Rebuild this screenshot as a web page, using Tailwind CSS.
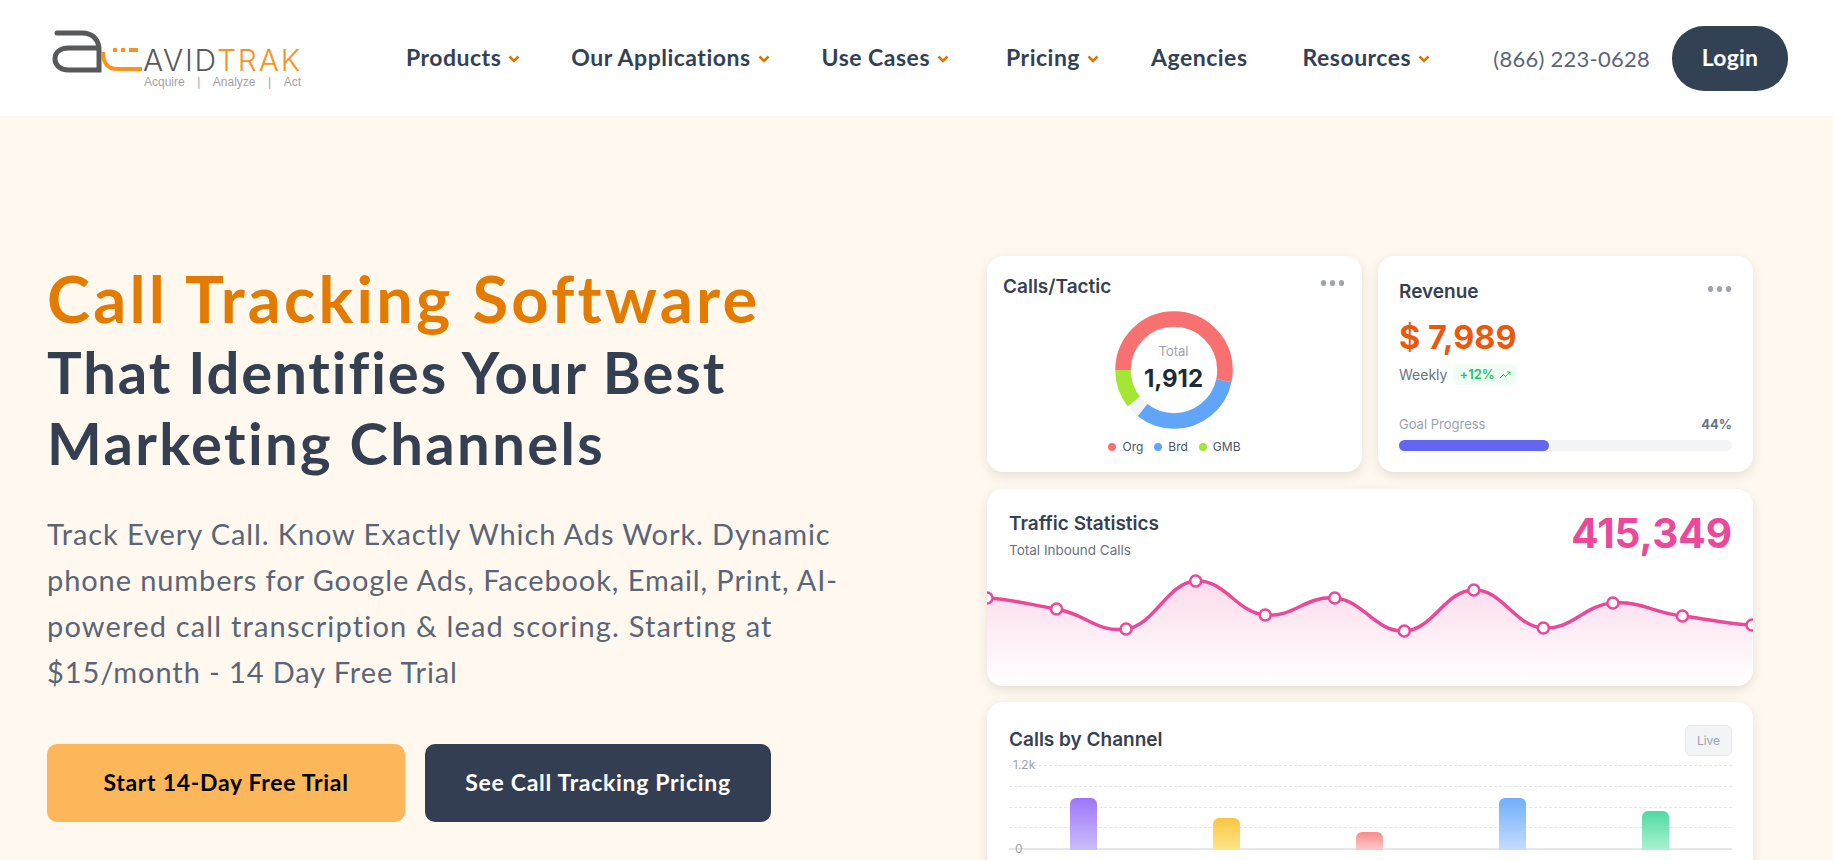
<!DOCTYPE html>
<html lang="en">
  <head>
    <meta charset="UTF-8" />
    <meta name="viewport" content="width=device-width, initial-scale=1.0" />
    <title>AvidTrak Call Tracking Software</title>
    <script src="https://cdn.jsdelivr.net/npm/@tailwindcss/browser@4"></script>
  </head>
  <body class="h-screen overflow-hidden bg-[#fff8ef] font-['Lato','Liberation_Sans',sans-serif] [font-variant-ligatures:none]">
    <!-- Header -->
    <header class="flex h-[116px] items-center bg-white pl-[47px] pr-[45px]">
      <!-- Logo -->
      <div class="relative h-[116px] w-[359px] shrink-0">
        <svg class="absolute left-[3px] top-[26px]" width="100" height="50" viewBox="0 0 100 50" fill="none">
          <path d="M7 7H32C43 7 49 14 49 24V44H19C9 44 5 38 5 33C5 27 9 22 19 22H49" stroke="#58595b" stroke-width="5" stroke-linecap="round" />
          <path d="M53 26C53 37 58 43 67 43H92" stroke="#f7931e" stroke-width="4" />
          <path d="M63 24H80" stroke="#f7931e" stroke-width="4" stroke-dasharray="4 4" />
          <path d="M80 24H88" stroke="#f7931e" stroke-width="4" />
        </svg>
        <div class="absolute left-[96px] top-[44px] whitespace-nowrap font-['Inter',sans-serif] text-[30px] font-light leading-[32px] tracking-[1.8px] text-[#58595b]">AVID<span class="text-[#f7931e]">TRAK</span></div>
        <div class="absolute left-[97px] top-[75px] flex w-[157px] justify-between font-['Liberation_Sans',sans-serif] text-[12px] leading-[14px] text-[#a3a3a3]">
          <span>Acquire</span><span>|</span><span>Analyze</span><span>|</span><span>Act</span>
        </div>
      </div>

      <nav class="-mt-[2px] flex items-center gap-[52px] text-[23px] font-bold tracking-[0.5px] text-[#334155]">
        <a class="flex items-center gap-[7px]">Products
          <svg class="mt-1" width="12" height="8" viewBox="0 0 12 8" fill="none"><path d="M1.500 1.500L6 6L10.500 1.500" stroke="#d97706" stroke-width="2.600" /></svg>
        </a>
        <a class="-ml-[1px] flex items-center gap-[7px]">Our Applications
          <svg class="mt-1" width="12" height="8" viewBox="0 0 12 8" fill="none"><path d="M1.500 1.500L6 6L10.500 1.500" stroke="#d97706" stroke-width="2.600" /></svg>
        </a>
        <a class="flex items-center gap-[7px]">Use Cases
          <svg class="mt-1" width="12" height="8" viewBox="0 0 12 8" fill="none"><path d="M1.500 1.500L6 6L10.500 1.500" stroke="#d97706" stroke-width="2.600" /></svg>
        </a>
        <a class="ml-[5px] flex items-center gap-[7px]">Pricing
          <svg class="mt-1" width="12" height="8" viewBox="0 0 12 8" fill="none"><path d="M1.500 1.500L6 6L10.500 1.500" stroke="#d97706" stroke-width="2.600" /></svg>
        </a>
        <a>Agencies</a>
        <a class="ml-[3px] flex items-center gap-[7px]">Resources
          <svg class="mt-1" width="12" height="8" viewBox="0 0 12 8" fill="none"><path d="M1.500 1.500L6 6L10.500 1.500" stroke="#d97706" stroke-width="2.600" /></svg>
        </a>
      </nav>

      <a class="ml-auto text-[22px] tracking-[0.25px] text-[#5b6577]">(866) 223-0628</a>
      <a class="ml-[22px] flex h-[65px] w-[116px] items-center justify-center rounded-[32px] bg-[#334155] pb-[2px] text-[23px] font-bold tracking-[0.2px] text-white">Login</a>
    </header>

    <!-- Hero -->
    <main class="flex items-start justify-between pl-[47px] pr-[80px] pt-[140px]">
      <section class="mt-[7px]">
        <h1 class="text-[58px] font-bold leading-[71px] tracking-[1.9px] text-[#343f52]">
          <span class="text-[65px] tracking-[3.2px] text-[#e27b00]">Call Tracking Software</span><br />
          That Identifies Your Best<br />
          <span class="tracking-[2.350px]">Marketing Channels</span>
        </h1>
        <p class="mt-[33px] text-[29px] leading-[46px] tracking-[0.9px] text-[#5b6577]">
          Track Every Call. Know Exactly Which Ads Work. Dynamic<br />
          phone numbers for Google Ads, Facebook, Email, Print, AI-<br />
          <span class="tracking-[1.170px]">powered call transcription &amp; lead scoring. Starting at</span><br />
          $15/month - 14 Day Free Trial
        </p>
        <div class="mt-[49px] flex gap-5">
          <a class="flex h-[78px] w-[358px] items-center justify-center rounded-[10px] bg-[#fbb75a] pb-[2px] text-[23px] font-bold tracking-[0.7px] text-black">Start 14-Day Free Trial</a>
          <a class="flex h-[78px] w-[346px] items-center justify-center rounded-[10px] bg-[#343e52] pb-[2px] text-[23px] font-bold tracking-[0.7px] text-white">See Call Tracking Pricing</a>
        </div>
      </section>

      <!-- Dashboard cards -->
      <section class="w-[766px] shrink-0 font-['Inter',sans-serif]">
        <div class="grid grid-cols-2 gap-4">
          <div class="h-[216px] rounded-2xl bg-white px-4 pt-[17px] shadow-[0_4px_12px_rgba(0,0,0,0.10)]">
            <div class="flex items-start justify-between">
              <h3 class="mt-[2px] text-[19px] font-semibold leading-6 text-[#374151]">Calls/Tactic</h3>
              <div class="mr-[2px] mt-[7px] flex gap-[3.500px]"><i class="size-[5.500px] rounded-full bg-[#9ca3af]"></i><i class="size-[5.500px] rounded-full bg-[#9ca3af]"></i><i class="size-[5.500px] rounded-full bg-[#9ca3af]"></i></div>
            </div>
            <div class="relative mx-auto mt-[12px] size-[118px] -translate-x-[1px]">
              <svg class="-rotate-180" width="118" height="118" viewBox="0 0 118 118" fill="none">
                <circle cx="59" cy="59" r="51" stroke="#f3f4f6" stroke-width="15.500" />
                <circle cx="59" cy="59" r="51" stroke="#a3e635" stroke-width="15.500" pathLength="360" stroke-dasharray="38 322" stroke-dashoffset="38" />
                <circle cx="59" cy="59" r="51" stroke="#60a5fa" stroke-width="15.500" pathLength="360" stroke-dasharray="116 244" stroke-dashoffset="-192" />
                <circle cx="59" cy="59" r="51" stroke="#f87171" stroke-width="15.500" pathLength="360" stroke-dasharray="192 168" />
              </svg>
              <div class="absolute inset-0 flex flex-col items-center justify-center pb-[4px]">
                <span class="text-[13px] leading-4 text-[#9ca3af]">Total</span>
                <span class="mt-[6px] text-2xl font-bold leading-7 text-[#1f2937]">1,912</span>
              </div>
            </div>
            <div class="mt-[10px] flex justify-center gap-[11px] text-xs leading-4 text-[#4b5563]">
              <span class="flex items-center gap-[6px]"><i class="size-2 rounded-full bg-[#f87171]"></i>Org</span>
              <span class="flex items-center gap-[6px]"><i class="size-2 rounded-full bg-[#60a5fa]"></i>Brd</span>
              <span class="flex items-center gap-[6px]"><i class="size-2 rounded-full bg-[#a3e635]"></i>GMB</span>
            </div>
          </div>

          <div class="h-[216px] rounded-2xl bg-white px-[21px] pt-[23px] shadow-[0_4px_12px_rgba(0,0,0,0.10)]">
            <div class="flex items-start justify-between">
              <h3 class="mt-[1px] text-[19px] font-semibold leading-6 text-[#374151]">Revenue</h3>
              <div class="mr-[1px] mt-[7px] flex gap-[3.500px]"><i class="size-[5.500px] rounded-full bg-[#9ca3af]"></i><i class="size-[5.500px] rounded-full bg-[#9ca3af]"></i><i class="size-[5.500px] rounded-full bg-[#9ca3af]"></i></div>
            </div>
            <div class="mt-[14px] text-[32.500px] font-bold leading-10 text-[#ea580c]">$ 7,989</div>
            <div class="mt-[6px] flex items-center gap-[6px]">
              <span class="text-sm text-[#6b7280]">Weekly</span>
              <span class="flex h-[21px] items-center gap-[4px] rounded-md bg-[#f0fdf4] px-[6px] text-[13px] font-semibold text-[#22c55e]">+12%
                <svg width="12" height="8" viewBox="0 0 12 8" fill="none"><path d="M1 7L4.500 3.500L6.500 5.500L11 1M8 1H11V4" stroke="#22c55e" stroke-width="1" /></svg>
              </span>
            </div>
            <div class="mt-[31px] flex justify-between text-[13px] leading-4">
              <span class="text-[#9ca3af]">Goal Progress</span>
              <span class="font-bold text-[#6b7280]">44%</span>
            </div>
            <div class="mt-[8px] h-[11px] w-full rounded-full bg-[#f3f4f6]">
              <div class="h-full w-[45%] rounded-full bg-[#6366f1]"></div>
            </div>
          </div>
        </div>

        <div class="relative mt-[17px] h-[197px] overflow-hidden rounded-2xl bg-white shadow-[0_4px_12px_rgba(0,0,0,0.10)]">
          <div class="flex items-start justify-between pl-[22px] pr-[21px] pt-[23px]">
            <div>
              <h3 class="text-[19px] font-semibold leading-6 text-[#374151]">Traffic Statistics</h3>
              <p class="mt-[4px] text-[13.500px] leading-5 text-[#6b7280]">Total Inbound Calls</p>
            </div>
            <div class="-mt-[2px] text-[40.500px] font-bold leading-[48px] text-[#ec4899]">415,349</div>
          </div>
          <svg id="traffic" class="absolute left-0 top-0" width="766" height="197" viewBox="0 0 766 197" fill="none">
            <defs>
              <linearGradient id="pink" x1="0" y1="88" x2="0" y2="197" gradientUnits="userSpaceOnUse">
                <stop offset="0" stop-color="#ec4899" stop-opacity="0.2" />
                <stop offset="1" stop-color="#ec4899" stop-opacity="0" />
              </linearGradient>
            </defs>
          </svg>
        </div>

        <div class="mt-4 h-[200px] rounded-2xl bg-white pl-[22px] pr-[21px] pt-[23px] shadow-[0_4px_12px_rgba(0,0,0,0.10)]">
          <div class="flex items-start justify-between">
            <h3 class="mt-[3px] text-[19px] font-semibold leading-6 text-[#374151]">Calls by Channel</h3>
            <span class="flex h-[31px] w-[47px] items-center justify-center rounded-md border border-[#e5e7eb] bg-[#f3f4f6] text-xs text-[#9ca3af]">Live</span>
          </div>
          <div class="relative mt-[9px] h-[85px]">
            <div class="absolute inset-0 flex flex-col justify-between">
              <i class="block border-t border-dashed border-[#e5e7eb]"></i>
              <i class="block border-t border-dashed border-[#e5e7eb]"></i>
              <i class="block border-t border-dashed border-[#e5e7eb]"></i>
              <i class="block border-t border-dashed border-[#e5e7eb]"></i>
              <i class="block border-t-2 border-[#e5e7eb]"></i>
            </div>
            <span class="absolute -top-[7px] left-[4px] text-xs leading-[14px] text-[#9ca3af]">1.2k</span>
            <span class="absolute -bottom-[6px] left-[6px] text-xs leading-[14px] text-[#9ca3af]">0</span>
            <div class="absolute bottom-0 left-[61px] right-[63px] flex items-end justify-between">
              <i class="block h-[52px] w-[27px] rounded-t-md bg-gradient-to-b from-[#9f75f8] to-[#cbbdfb]"></i>
              <i class="block h-[32px] w-[27px] rounded-t-md bg-gradient-to-b from-[#fbc53c] to-[#fde68a]"></i>
              <i class="block h-[18px] w-[27px] rounded-t-md bg-gradient-to-b from-[#f98b8b] to-[#fecaca]"></i>
              <i class="block h-[52px] w-[27px] rounded-t-md bg-gradient-to-b from-[#70aefb] to-[#c5dcfd]"></i>
              <i class="block h-[39px] w-[27px] rounded-t-md bg-gradient-to-b from-[#4cd9a3] to-[#a7f3d0]"></i>
            </div>
          </div>
        </div>
      </section>
    </main>

    <script>
      // Traffic line: smooth curve through the points, y relative to the card
      const ys = [109, 120, 140, 92, 126, 109, 142, 101, 139, 114, 127, 136];
      const step = 765 / 11;
      const pts = ys.map((y, i) => [i * step, y]);
      let line = `M${pts[0][0]} ${pts[0][1]}`;
      for (let i = 0; i < pts.length - 1; i++) {
        const p0 = pts[i - 1] || pts[i];
        const p1 = pts[i];
        const p2 = pts[i + 1];
        const p3 = pts[i + 2] || p2;
        const t = 0.15;
        const c1 = [p1[0] + step * 0.42, p1[1] + (p2[1] - p0[1]) * t];
        const c2 = [p2[0] - step * 0.42, p2[1] - (p3[1] - p1[1]) * t];
        line += ` C${c1[0]} ${c1[1]} ${c2[0]} ${c2[1]} ${p2[0]} ${p2[1]}`;
      }
      const svg = document.getElementById("traffic");
      const dots = pts
        .map((p) => `<circle cx="${p[0]}" cy="${p[1]}" r="5.500" fill="#fff" stroke="#ec4899" stroke-width="2.500" />`)
        .join("");
      svg.insertAdjacentHTML(
        "beforeend",
        `<path d="${line} L765 197 L0 197Z" fill="url(#pink)" /><path d="${line}" stroke="#ec4899" stroke-width="3.500" />${dots}`
      );
    </script>
  </body>
</html>
